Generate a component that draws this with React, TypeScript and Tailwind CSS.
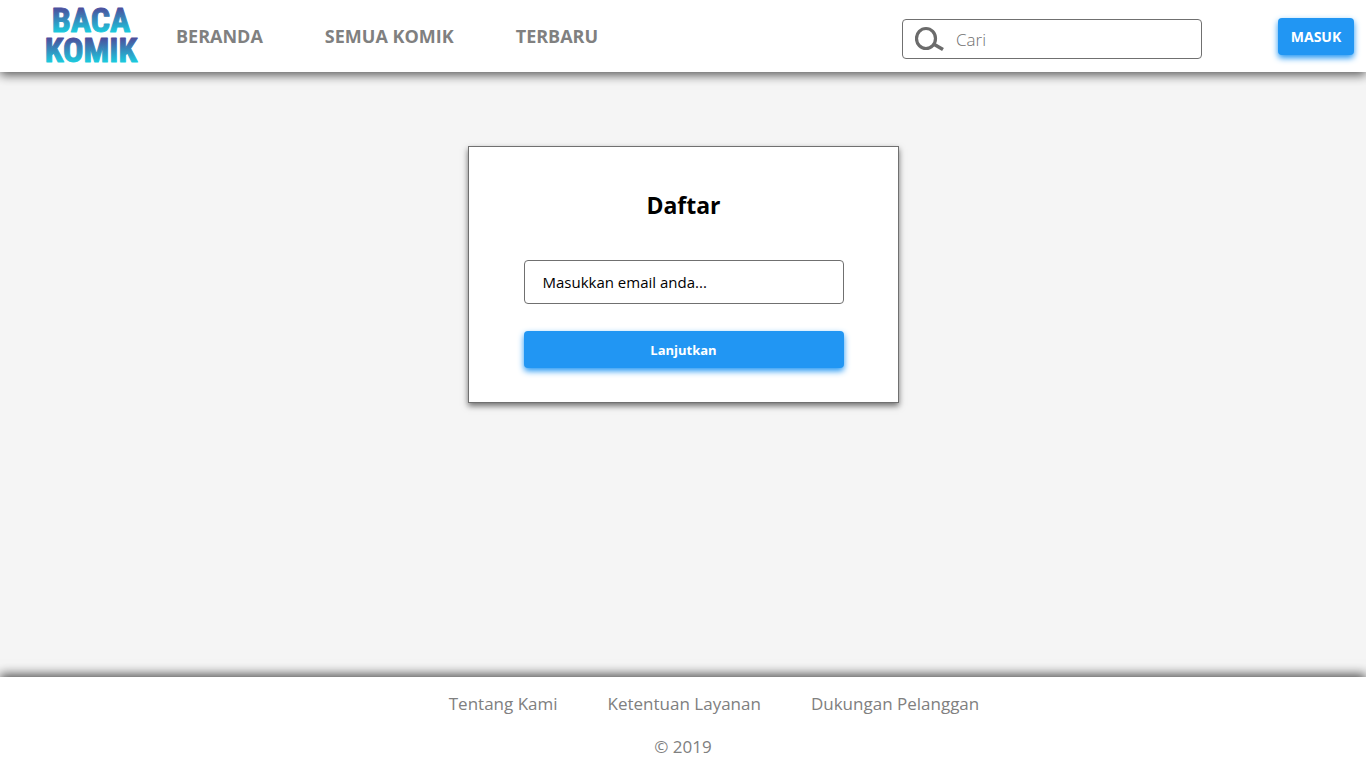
import React from "react";

const navLinks = ["BERANDA", "SEMUA KOMIK", "TERBARU"];
const footerLinks = ["Tentang Kami", "Ketentuan Layanan", "Dukungan Pelanggan"];

function Logo() {
  return (
    <svg width="96" height="72" viewBox="0 0 96 72" role="img" aria-label="Baca Komik">
      <defs>
        <linearGradient id="logo-top" gradientUnits="userSpaceOnUse" x1="0" y1="8" x2="0" y2="33">
          <stop offset="0" stopColor="#4c4e9c" />
          <stop offset="1" stopColor="#1acfe0" />
        </linearGradient>
        <linearGradient id="logo-bottom" gradientUnits="userSpaceOnUse" x1="0" y1="38" x2="0" y2="63">
          <stop offset="0" stopColor="#4c4e9c" />
          <stop offset="1" stopColor="#1acfe0" />
        </linearGradient>
      </defs>
      <g
        className="font-['Liberation_Sans_Narrow','Roboto_Condensed',sans-serif] font-bold"
        fontSize="34"
        textAnchor="middle"
        strokeWidth="1"
        strokeLinejoin="round"
      >
        <text x="47" y="32" fill="url(#logo-top)" stroke="url(#logo-top)">BACA</text>
        <text x="47" y="62" fill="url(#logo-bottom)" stroke="url(#logo-bottom)">KOMIK</text>
      </g>
    </svg>
  );
}

function SearchIcon() {
  return (
    <svg width="30" height="26" viewBox="0 0 30 26" fill="none" stroke="#6b6b6b" aria-hidden="true">
      <ellipse cx="11" cy="12.5" rx="9.5" ry="10" strokeWidth="3.2" />
      <path d="M18.5 18 L28 23.5" strokeWidth="3.6" />
    </svg>
  );
}

export default function App() {
  return (
    <div className="flex min-h-screen flex-col bg-[#f5f5f5] font-['Open_Sans',sans-serif] text-black">
      <header className="flex h-[72px] items-center bg-white pr-3 pl-11 shadow-[0_3px_10px_rgba(0,0,0,0.65)]">
        <a href="#" className="mr-9 shrink-0">
          <Logo />
        </a>
        <nav className="flex gap-[62px] text-[18px] leading-6 font-bold whitespace-nowrap text-[#808080]">
          {navLinks.map((label) => (
            <a key={label} href="#">{label}</a>
          ))}
        </nav>
        <label className="mt-1.5 mr-19 ml-auto flex h-10 w-[300px] items-center gap-[11px] rounded border border-[#707070] pl-3">
          <SearchIcon />
          <input
            type="search"
            aria-label="Cari"
            placeholder="Cari"
            className="w-0 grow bg-transparent pt-0.5 text-[17px] font-light outline-none placeholder:text-[#707070]"
          />
        </label>
        <button className="h-[37px] w-[76px] rounded bg-[#2196f3] text-[14px] font-bold text-white shadow-[0_3px_6px_#2196f3]">
          MASUK
        </button>
      </header>

      <main className="flex grow justify-center pt-[74px]">
        <form className="flex w-[431px] flex-col self-start border border-[#707070] bg-white pt-[42px] pr-[54px] pb-[34px] pl-[55px] shadow-[0_3px_6px_rgba(0,0,0,0.55)]">
          <h1 className="text-center text-[23px] leading-8 font-bold">Daftar</h1>
          <input
            type="email"
            aria-label="Email"
            placeholder="Masukkan email anda..."
            className="mt-[39px] h-11 rounded border border-[#707070] px-[18px] text-[15px] outline-none placeholder:text-black"
          />
          <button
            type="button"
            className="mt-[27px] h-[37px] rounded bg-[#2196f3] pt-0.5 text-[13px] font-bold text-white shadow-[0_3px_6px_#2196f3]"
          >
            Lanjutkan
          </button>
        </form>
      </main>

      <footer className="flex h-[91px] flex-col items-center bg-white pt-[15px] text-[17px] leading-6 text-[#808080] shadow-[0_-3px_10px_rgba(0,0,0,0.65)]">
        <nav className="flex gap-[50px] pl-[62px]">
          {footerLinks.map((label) => (
            <a key={label} href="#">{label}</a>
          ))}
        </nav>
        <p className="mt-[19px]">© 2019</p>
      </footer>
    </div>
  );
}
